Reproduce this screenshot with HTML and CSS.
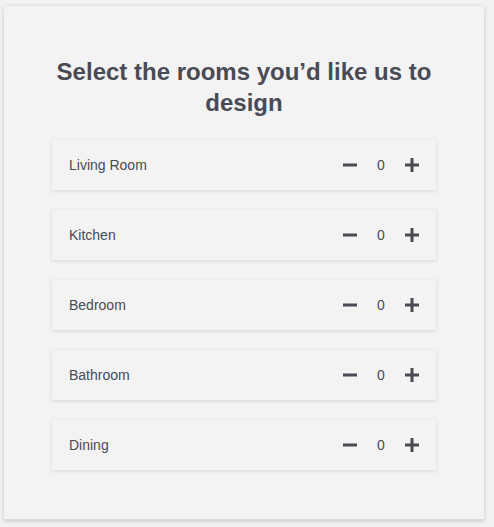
FILE: index.html
```html
<!DOCTYPE html>
<html lang="en">
<head>
  <meta charset="UTF-8" />
  <meta name="viewport" content="width=device-width, initial-scale=1.0"/>
  <title>Room Picker</title>
  <link rel="stylesheet" href="styles.css">
</head>
<body>

  <div class="card">
    <h1>Select the rooms you’d like us to design</h1>

    <div class="rooms">
      <div class="room">
        <span class="room-name">Living Room</span>
        <div class="counter">
          <button class="btn minus" aria-label="Remove"><svg width="14" height="14" viewBox="0 0 14 14"><rect x="0" y="5.5" width="14" height="3" fill="currentColor"/></svg></button>
          <span class="count">0</span>
          <button class="btn plus" aria-label="Add"><svg width="14" height="14" viewBox="0 0 14 14"><rect x="0" y="5.5" width="14" height="3" fill="currentColor"/><rect x="5.5" y="0" width="3" height="14" fill="currentColor"/></svg></button>
        </div>
      </div>
      <div class="room">
        <span class="room-name">Kitchen</span>
        <div class="counter">
          <button class="btn minus" aria-label="Remove"><svg width="14" height="14" viewBox="0 0 14 14"><rect x="0" y="5.5" width="14" height="3" fill="currentColor"/></svg></button>
          <span class="count">0</span>
          <button class="btn plus" aria-label="Add"><svg width="14" height="14" viewBox="0 0 14 14"><rect x="0" y="5.5" width="14" height="3" fill="currentColor"/><rect x="5.5" y="0" width="3" height="14" fill="currentColor"/></svg></button>
        </div>
      </div>
      <div class="room">
        <span class="room-name">Bedroom</span>
        <div class="counter">
          <button class="btn minus" aria-label="Remove"><svg width="14" height="14" viewBox="0 0 14 14"><rect x="0" y="5.5" width="14" height="3" fill="currentColor"/></svg></button>
          <span class="count">0</span>
          <button class="btn plus" aria-label="Add"><svg width="14" height="14" viewBox="0 0 14 14"><rect x="0" y="5.5" width="14" height="3" fill="currentColor"/><rect x="5.5" y="0" width="3" height="14" fill="currentColor"/></svg></button>
        </div>
      </div>
      <div class="room">
        <span class="room-name">Bathroom</span>
        <div class="counter">
          <button class="btn minus" aria-label="Remove"><svg width="14" height="14" viewBox="0 0 14 14"><rect x="0" y="5.5" width="14" height="3" fill="currentColor"/></svg></button>
          <span class="count">0</span>
          <button class="btn plus" aria-label="Add"><svg width="14" height="14" viewBox="0 0 14 14"><rect x="0" y="5.5" width="14" height="3" fill="currentColor"/><rect x="5.5" y="0" width="3" height="14" fill="currentColor"/></svg></button>
        </div>
      </div>
      <div class="room">
        <span class="room-name">Dining</span>
        <div class="counter">
          <button class="btn minus" aria-label="Remove"><svg width="14" height="14" viewBox="0 0 14 14"><rect x="0" y="5.5" width="14" height="3" fill="currentColor"/></svg></button>
          <span class="count">0</span>
          <button class="btn plus" aria-label="Add"><svg width="14" height="14" viewBox="0 0 14 14"><rect x="0" y="5.5" width="14" height="3" fill="currentColor"/><rect x="5.5" y="0" width="3" height="14" fill="currentColor"/></svg></button>
        </div>
      </div>
    </div>
  </div>

</body>
</html>
```

FILE: styles.css
```css
body {
  margin: 0;
  padding: 6px 10px 7px 4px;
  background: #f2f2f2;
  color: #4a4a55;
  font-family: 'Liberation Sans', Arial, sans-serif;
}

.card {
  background: #f3f3f3;
  height: 514px;
  box-sizing: border-box;
  padding: 50px 48px 50px;
  border-bottom: 1px solid #dcdcdc;
  box-shadow: 0 1px 4px rgba(0, 0, 0, 0.2);
}

h1 {
  margin: 0 0 22px;
  font-size: 24px;
  line-height: 31px;
  font-weight: bold;
  text-align: center;
  color: #4a4a55;
}

.rooms {
  display: flex;
  flex-direction: column;
  gap: 20px;
}

.room {
  display: flex;
  align-items: center;
  justify-content: space-between;
  height: 50px;
  box-sizing: border-box;
  padding: 0 17px 1px;
  background: #f3f3f3;
  box-shadow: 0 1px 4px rgba(0, 0, 0, 0.12);
}

.room-name {
  font-size: 14px;
}

.counter {
  display: flex;
  align-items: center;
}

.btn {
  display: flex;
  align-items: center;
  justify-content: center;
  padding: 0;
  border: none;
  background: none;
  color: #4a4a55;
  cursor: pointer;
}

.count {
  width: 48px;
  text-align: center;
  font-size: 14px;
}
```
